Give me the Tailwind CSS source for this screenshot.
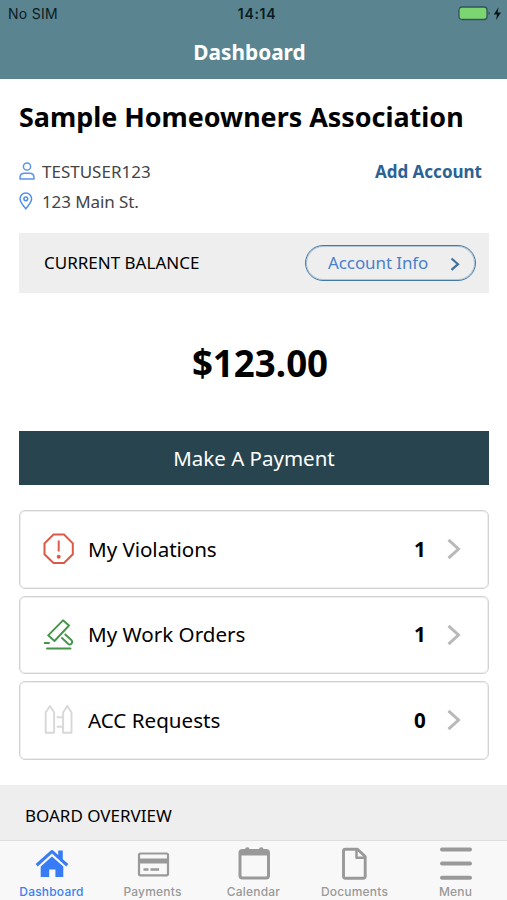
<!DOCTYPE html>
<html lang="en">
<head>
<meta charset="utf-8">
<title>Dashboard</title>
<script src="https://cdn.jsdelivr.net/npm/@tailwindcss/browser@4"></script>
</head>
<body class="w-[507px] h-[900px] overflow-hidden bg-white text-black font-['Noto_Sans',sans-serif] flex flex-col whitespace-nowrap">
<header class="h-[79px] shrink-0 bg-[#598490]">
  <div class="h-[27px] grid grid-cols-3 items-center pl-2 pr-[5px] font-['Inter',sans-serif] text-[14px] text-[#0c1b20]">
    <span class="tracking-[0.3px]">No SIM</span>
    <span class="text-center font-semibold tracking-[0.7px] pl-1">14:14</span>
    <svg class="justify-self-end" width="44" height="16" viewBox="0 0 44 16">
      <rect x="1" y="1" width="28" height="12.500" rx="3" fill="#7bd672" stroke="#34535c" stroke-width="1.300"/>
      <path d="M30.500 5.500v3.500q1.300-.4 1.300-1.750T30.500 5.500" fill="#34535c"/>
      <path d="M40.500 1.200 35.800 8.400h3.200l-1 5.600 5-7.600h-3.300z" fill="#0b1519"/>
    </svg>
  </div>
  <h1 class="h-[51px] leading-[51px] pr-2 text-center text-white font-bold text-[20.800px]">Dashboard</h1>
</header>
<main class="h-[706px] shrink-0 px-[19px] pt-[19px]">
  <h2 class="h-[38px] leading-[38px] text-[26.900px] font-bold">Sample Homeowners Association</h2>
  <div class="mt-[21px] h-[30px] flex items-center justify-between pr-[6px] text-[17px]">
    <div class="flex items-center gap-[7px] text-[#444]">
      <svg class="relative -top-px" width="16" height="18" viewBox="0 0 16 18" fill="none" stroke="#5794ee" stroke-width="1.500"><circle cx="8" cy="4.500" r="3.600"/><path d="M1 17v-1.300Q1 11.300 5.500 11.300h5q4.500 0 4.500 4.400V17z" stroke-linejoin="round"/></svg>
      <span>TESTUSER123</span>
    </div>
    <a class="font-bold text-[#2c6294]">Add Account</a>
  </div>
  <div class="h-[30px] flex items-center gap-[7px] text-[17px] text-[#444]">
    <svg class="relative -top-px" width="16" height="18" viewBox="0 0 16 18" fill="none" stroke="#4f8eec" stroke-width="1.500"><path d="M6.800 16.800C2.500 11.800 1 9.500 1 6.800a5.800 5.800 0 0 1 11.600 0c0 2.700-1.500 5-5.800 10z"/><circle cx="6.800" cy="6.800" r="1.900"/></svg>
    <span class="tracking-[-0.1px]">123 Main St.</span>
  </div>
  <section class="mt-[16px] h-[60px] w-[470px] bg-[#eeeeee] pl-[25px] pr-[13px] flex items-center justify-between">
    <span class="text-[17px]">CURRENT BALANCE</span>
    <button class="h-[36px] w-[171px] rounded-full border border-[#457aa7] inset-ring inset-ring-[#457aa7]/35 pl-[22px] pr-[14px] flex items-center justify-between text-[17px] text-[#4a80cb]">
      <span class="tracking-[-0.1px]">Account Info</span>
      <svg class="relative top-px" width="12" height="14" viewBox="0 0 12 14" fill="none" stroke="#3f729c" stroke-width="2.200"><path d="m2.500 1.500 6.500 5.700-6.500 5.700"/></svg>
    </button>
  </section>
  <div class="h-[138px] w-[482px] pt-[3px] flex items-center justify-center text-[36.700px] font-bold">$123.00</div>
  <button class="block h-[54px] w-[470px] pt-px bg-[#28454f] text-white text-[20.500px]">Make A Payment</button>
  <div class="mt-[25px] w-[470px] flex flex-col gap-[7px] text-[20.600px]">
    <div class="h-[78.500px] rounded-md border border-[#d2d2d2] inset-ring inset-ring-[#eeeeee] pl-[23px] pr-[27px] flex items-center">
      <svg width="32" height="32" viewBox="0 0 32 32" fill="none" stroke="#dc5a45" stroke-width="2"><path d="M10.500 1.500h10.500l8.800 8.800v11L21 30H10.500L1.500 21.300v-11z"/><path d="M15.700 7.500v11"/><circle cx="15.700" cy="23.700" r="2" fill="#dc5a45" stroke="none"/></svg>
      <span class="ml-[13px] flex-1 tracking-[-0.05px]">My Violations</span><b class="w-6 text-center">1</b>
      <svg class="ml-3 mr-[-3px]" width="20" height="22" viewBox="0 0 20 22" fill="none" stroke="#b9b9b9" stroke-width="3"><path d="m4.500 1.800 10 9.200-10 9.200"/></svg>
    </div>
    <div class="h-[78.500px] rounded-md border border-[#d2d2d2] inset-ring inset-ring-[#eeeeee] pl-[23px] pr-[27px] flex items-center">
      <svg width="32" height="32" viewBox="0 0 32 32" fill="none" stroke="#469448" stroke-width="1.900" stroke-linejoin="round" stroke-linecap="round"><path d="M20 1.300 26 6.500 11.500 22 5.200 16.300z"/><path d="m19 19 6.300 6q1.500 1.200 3.100-.3t.2-3.400L22.300 15.500"/><path d="M1.700 24H6M4 29.500h23.500"/></svg>
      <span class="ml-[13px] flex-1">My Work Orders</span><b class="w-6 text-center">1</b>
      <svg class="ml-3 mr-[-3px]" width="20" height="22" viewBox="0 0 20 22" fill="none" stroke="#b9b9b9" stroke-width="3"><path d="m4.500 1.800 10 9.200-10 9.200"/></svg>
    </div>
    <div class="h-[78.500px] rounded-md border border-[#d2d2d2] inset-ring inset-ring-[#eeeeee] pl-[23px] pr-[27px] flex items-center">
      <svg width="32" height="32" viewBox="0 0 32 32" fill="none" stroke="#d8d8d8" stroke-width="1.900" stroke-linejoin="round"><path d="M7 2 2.700 8.500v20.300h8.400V8.500zM24.300 2 20.100 8.500v20.300h8.400V8.500zM13.700 13.300h6.400M13.700 22.800h6.400"/></svg>
      <span class="ml-[13px] flex-1">ACC Requests</span><b class="w-6 text-center">0</b>
      <svg class="ml-3 mr-[-3px]" width="20" height="22" viewBox="0 0 20 22" fill="none" stroke="#b9b9b9" stroke-width="3"><path d="m4.500 1.800 10 9.200-10 9.200"/></svg>
    </div>
  </div>
</main>
<section class="h-[55px] shrink-0 bg-[#eeeeee] pl-[25px] flex items-center pt-[6px] text-[17px]">BOARD OVERVIEW</section>
<nav class="h-[60px] shrink-0 bg-[#f8f8f8] border-t border-[#dedede] px-[1px] grid grid-cols-5 text-center font-['Inter',sans-serif] text-[12px] tracking-[0.2px] leading-[13px] font-medium text-[#999]">
  <div class="flex flex-col items-center pt-[5px] text-[#3d7ef0]">
    <svg width="34" height="36" viewBox="0 0 34 36" fill="#377cf5"><path d="M.7 18 15.500 4.700q1.500-1.300 3 0l4.700 4.300V4.500h4.600v8.700L33.300 18l-2 2.400L17 7.600 2.700 20.400z"/><path d="m5.700 20.500 11.300-10 11.300 10v10.500h-7.900V23.500h-6.200v7.500H5.700z"/></svg>
    <span class="mt-[3px]">Dashboard</span>
  </div>
  <div class="flex flex-col items-center pt-[5px]">
    <svg width="34" height="36" viewBox="0 0 34 36" fill="none" stroke="#999"><rect x="3" y="7.500" width="29" height="21.800" rx="1.500" stroke-width="2.200"/><path d="M3 15h29" stroke-width="5"/><path d="M7.500 23.500h5M14.500 23.500h8.500" stroke-width="2.600"/></svg>
    <span class="mt-[3px]">Payments</span>
  </div>
  <div class="flex flex-col items-center pt-[5px]">
    <svg width="34" height="36" viewBox="0 0 34 36"><rect x="3" y="4.500" width="28.500" height="27.500" rx="2.500" fill="none" stroke="#999" stroke-width="3"/><path d="M3 4h28.500v5.500H3zM8 3.500q0-2.200 2.300-2.200t2.300 2.200zM22 3.500q0-2.200 2.300-2.200t2.300 2.200z" fill="#999"/></svg>
    <span class="mt-[3px]">Calendar</span>
  </div>
  <div class="flex flex-col items-center pt-[5px]">
    <svg width="34" height="36" viewBox="0 0 34 36" fill="none" stroke="#999" stroke-width="2.900" stroke-linejoin="round"><path d="M7.500 3.200h12l7.700 7.300v19.700q0 2-2 2H7.500q-2 0-2-2V5.200q0-2 2-2z"/><path d="M18.500 4v7.700h8" stroke-width="2.500"/></svg>
    <span class="mt-[3px]">Documents</span>
  </div>
  <div class="flex flex-col items-center pt-[5px]">
    <svg width="34" height="36" viewBox="0 0 34 36" stroke="#999" stroke-width="4" stroke-linecap="round"><path d="M3 3.500h28M3 17.500h28M3 31.700h28"/></svg>
    <span class="mt-[3px]">Menu</span>
  </div>
</nav>
</body>
</html>
